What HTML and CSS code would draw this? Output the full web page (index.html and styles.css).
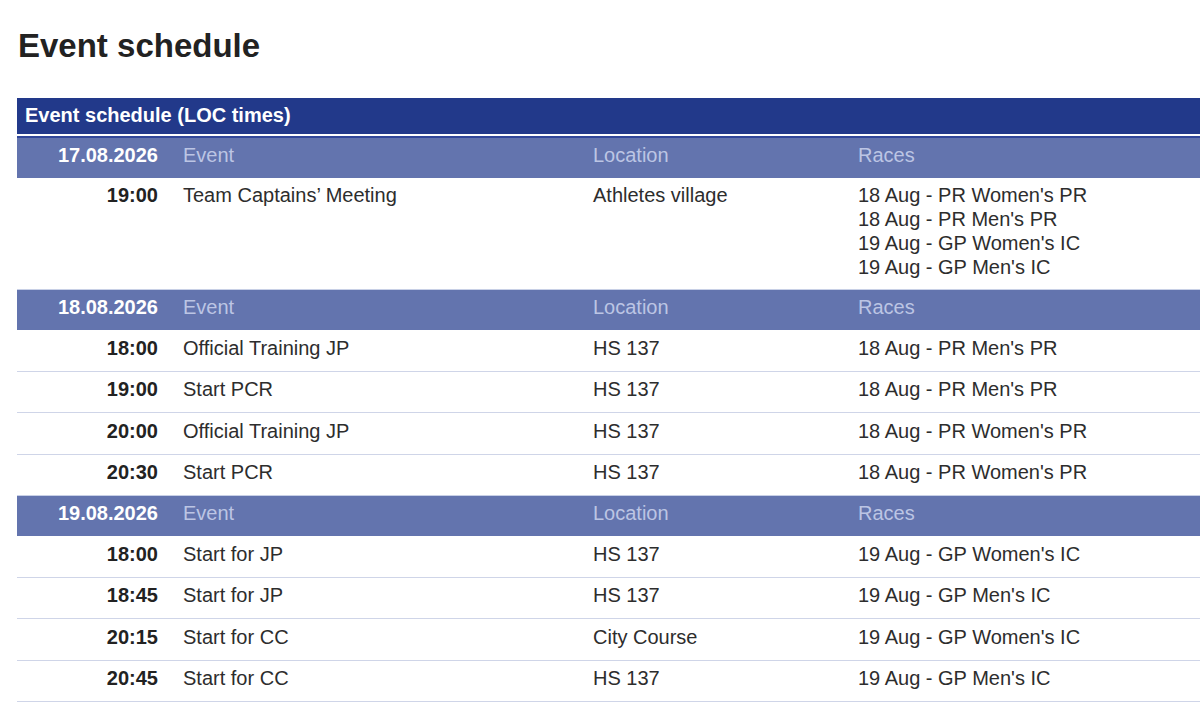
FILE: index.html
```html
<!DOCTYPE html>
<html>
<head>
<meta charset="utf-8">
<link rel="stylesheet" href="styles.css">
</head>
<body>
<h1 class="title">Event schedule</h1>
<table class="schedule">
  <colgroup>
    <col class="c-time"><col class="c-event"><col class="c-loc"><col class="c-races">
  </colgroup>
  <thead>
    <tr class="cap"><th colspan="4">Event schedule (LOC times)</th></tr>
  </thead>
  <tbody>
    <tr class="day first">
      <th class="date">17.08.2026</th><th>Event</th><th>Location</th><th>Races</th>
    </tr>
    <tr class="multi">
      <td class="time">19:00</td><td>Team Captains’ Meeting</td><td>Athletes village</td>
      <td>18 Aug - PR Women's PR<br>18 Aug - PR Men's PR<br>19 Aug - GP Women's IC<br>19 Aug - GP Men's IC</td>
    </tr>
    <tr class="day">
      <th class="date">18.08.2026</th><th>Event</th><th>Location</th><th>Races</th>
    </tr>
    <tr><td class="time">18:00</td><td>Official Training JP</td><td>HS 137</td><td>18 Aug - PR Men's PR</td></tr>
    <tr><td class="time">19:00</td><td>Start PCR</td><td>HS 137</td><td>18 Aug - PR Men's PR</td></tr>
    <tr><td class="time">20:00</td><td>Official Training JP</td><td>HS 137</td><td>18 Aug - PR Women's PR</td></tr>
    <tr><td class="time">20:30</td><td>Start PCR</td><td>HS 137</td><td>18 Aug - PR Women's PR</td></tr>
    <tr class="day">
      <th class="date">19.08.2026</th><th>Event</th><th>Location</th><th>Races</th>
    </tr>
    <tr><td class="time">18:00</td><td>Start for JP</td><td>HS 137</td><td>19 Aug - GP Women's IC</td></tr>
    <tr><td class="time">18:45</td><td>Start for JP</td><td>HS 137</td><td>19 Aug - GP Men's IC</td></tr>
    <tr><td class="time">20:15</td><td>Start for CC</td><td>City Course</td><td>19 Aug - GP Women's IC</td></tr>
    <tr><td class="time">20:45</td><td>Start for CC</td><td>HS 137</td><td>19 Aug - GP Men's IC</td></tr>
  </tbody>
</table>
</body>
</html>
```

FILE: styles.css
```css
html, body {
  margin: 0;
  padding: 0;
  background: #ffffff;
  overflow-x: hidden;
}
body {
  font-family: "Liberation Sans", Arial, Helvetica, sans-serif;
  color: #2b2b2b;
}
.title {
  margin: 27px 0 33px 18px;
  font-size: 33px;
  line-height: 38px;
  font-weight: bold;
  color: #222222;
}
.schedule {
  margin-left: 17px;
  width: calc(100% - 17px);
  border-collapse: separate;
  border-spacing: 0;
  font-size: 20px;
  line-height: 24px;
  table-layout: fixed;
}
.c-time { width: 158px; }
.c-event { width: 410px; }
.c-loc { width: 265px; }
.schedule .cap th {
  background: #22398a;
  color: #ffffff;
  text-align: left;
  font-weight: bold;
  height: 38px;
  padding: 0 8px 2px;
  box-sizing: border-box;
  border-bottom: 2px solid #ffffff;
}
.schedule .day th {
  background: #6374ae;
  color: #bcc5e4;
  font-weight: normal;
  text-align: left;
  padding: 5px 8px 11px;
  border-top: 1px solid #c8d0e6;
}
.schedule .day.first th {
  border-top: 2px solid #31479a;
  padding-top: 5px;
}
.schedule .day th.date {
  color: #ffffff;
  font-weight: bold;
  text-align: right;
  padding-right: 17px;
}
.schedule td {
  vertical-align: top;
  padding: 5.5px 8px 11px;
  border-bottom: 1px solid #cfd5e8;
  color: #2d2d2d;
}
.schedule tr.multi td {
  padding: 5px 8px 10px;
}
.schedule td.time,
.schedule tr.multi td.time {
  text-align: right;
  font-weight: bold;
  color: #222222;
  padding-right: 17px;
}
.schedule tr:has(+ tr.day) td {
  border-bottom: none;
}
```
